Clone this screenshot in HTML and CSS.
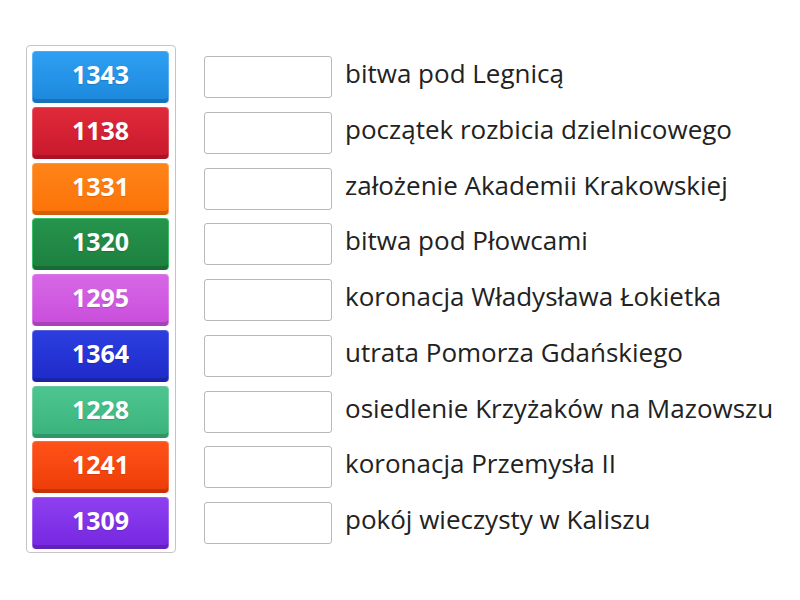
FILE: index.html
```html
<!DOCTYPE html>
<html lang="pl">
<head>
<meta charset="utf-8">
<link rel="stylesheet" href="styles.css">
</head>
<body>
<div class="game">
  <div class="bank">
    <div class="tile t-blue">1343</div>
    <div class="tile t-red">1138</div>
    <div class="tile t-orange">1331</div>
    <div class="tile t-green">1320</div>
    <div class="tile t-pink">1295</div>
    <div class="tile t-navy">1364</div>
    <div class="tile t-teal">1228</div>
    <div class="tile t-redorange">1241</div>
    <div class="tile t-violet">1309</div>
  </div>
  <div class="rows">
    <div class="row"><div class="slot"></div><div class="label">bitwa pod Legnicą</div></div>
    <div class="row"><div class="slot"></div><div class="label">początek rozbicia dzielnicowego</div></div>
    <div class="row"><div class="slot"></div><div class="label">założenie Akademii Krakowskiej</div></div>
    <div class="row"><div class="slot"></div><div class="label">bitwa pod Płowcami</div></div>
    <div class="row"><div class="slot"></div><div class="label">koronacja Władysława Łokietka</div></div>
    <div class="row"><div class="slot"></div><div class="label">utrata Pomorza Gdańskiego</div></div>
    <div class="row"><div class="slot"></div><div class="label">osiedlenie Krzyżaków na Mazowszu</div></div>
    <div class="row"><div class="slot"></div><div class="label">koronacja Przemysła II</div></div>
    <div class="row"><div class="slot"></div><div class="label">pokój wieczysty w Kaliszu</div></div>
  </div>
</div>
</body>
</html>
```

FILE: styles.css
```css
html, body {
  margin: 0;
  padding: 0;
  background: #ffffff;
  font-family: "Open Sans", "Liberation Sans", sans-serif;
}

.game {
  display: flex;
  align-items: flex-start;
  padding: 45px 0 0 26px;
}

.bank {
  width: 137px;
  padding: 5px 6px 3px 5px;
  border: 1px solid #c4c4c4;
  border-radius: 4px;
  display: flex;
  flex-direction: column;
  gap: 3.75px;
}

.tile {
  height: 52px;
  box-sizing: border-box;
  border-radius: 4px;
  color: #ffffff;
  font-weight: 700;
  font-size: 25px;
  display: flex;
  align-items: center;
  justify-content: center;
  padding-bottom: 7px;
  border: 1px solid rgba(255,255,255,0.25);
  border-bottom: 0;
  box-shadow: inset 0 -4px 0 rgba(0,0,0,0.16);
  text-shadow: 0 1px 1px rgba(0,0,0,0.15);
}

.t-blue { background: linear-gradient(#2e9ff2, #1c88dc); }
.t-red { background: linear-gradient(#e02a3a, #c8172c); }
.t-orange { background: linear-gradient(#ff8418, #fb7208); }
.t-green { background: linear-gradient(#25944c, #1d7f3f); border-color: #3bbd68; }
.t-pink { background: linear-gradient(#d768e6, #c94ddb); }
.t-navy { background: linear-gradient(#2c3ee0, #1e2ac8); }
.t-teal { background: linear-gradient(#4ec590, #38b27a); }
.t-redorange { background: linear-gradient(#ff5218, #ec3c08); }
.t-violet { background: linear-gradient(#8e40f0, #7526e0); }

.rows {
  display: flex;
  flex-direction: column;
  gap: 3.75px;
  padding-top: 6px;
  margin-left: 28px;
}

.row {
  height: 52px;
  display: flex;
  align-items: center;
}

.slot {
  width: 128px;
  height: 42px;
  box-sizing: border-box;
  border: 1px solid #b8b8b8;
  border-radius: 3px;
  background: #fff;
}

.label {
  margin-left: 13px;
  padding-bottom: 8px;
  font-size: 26px;
  color: #222222;
  white-space: nowrap;
}
```
